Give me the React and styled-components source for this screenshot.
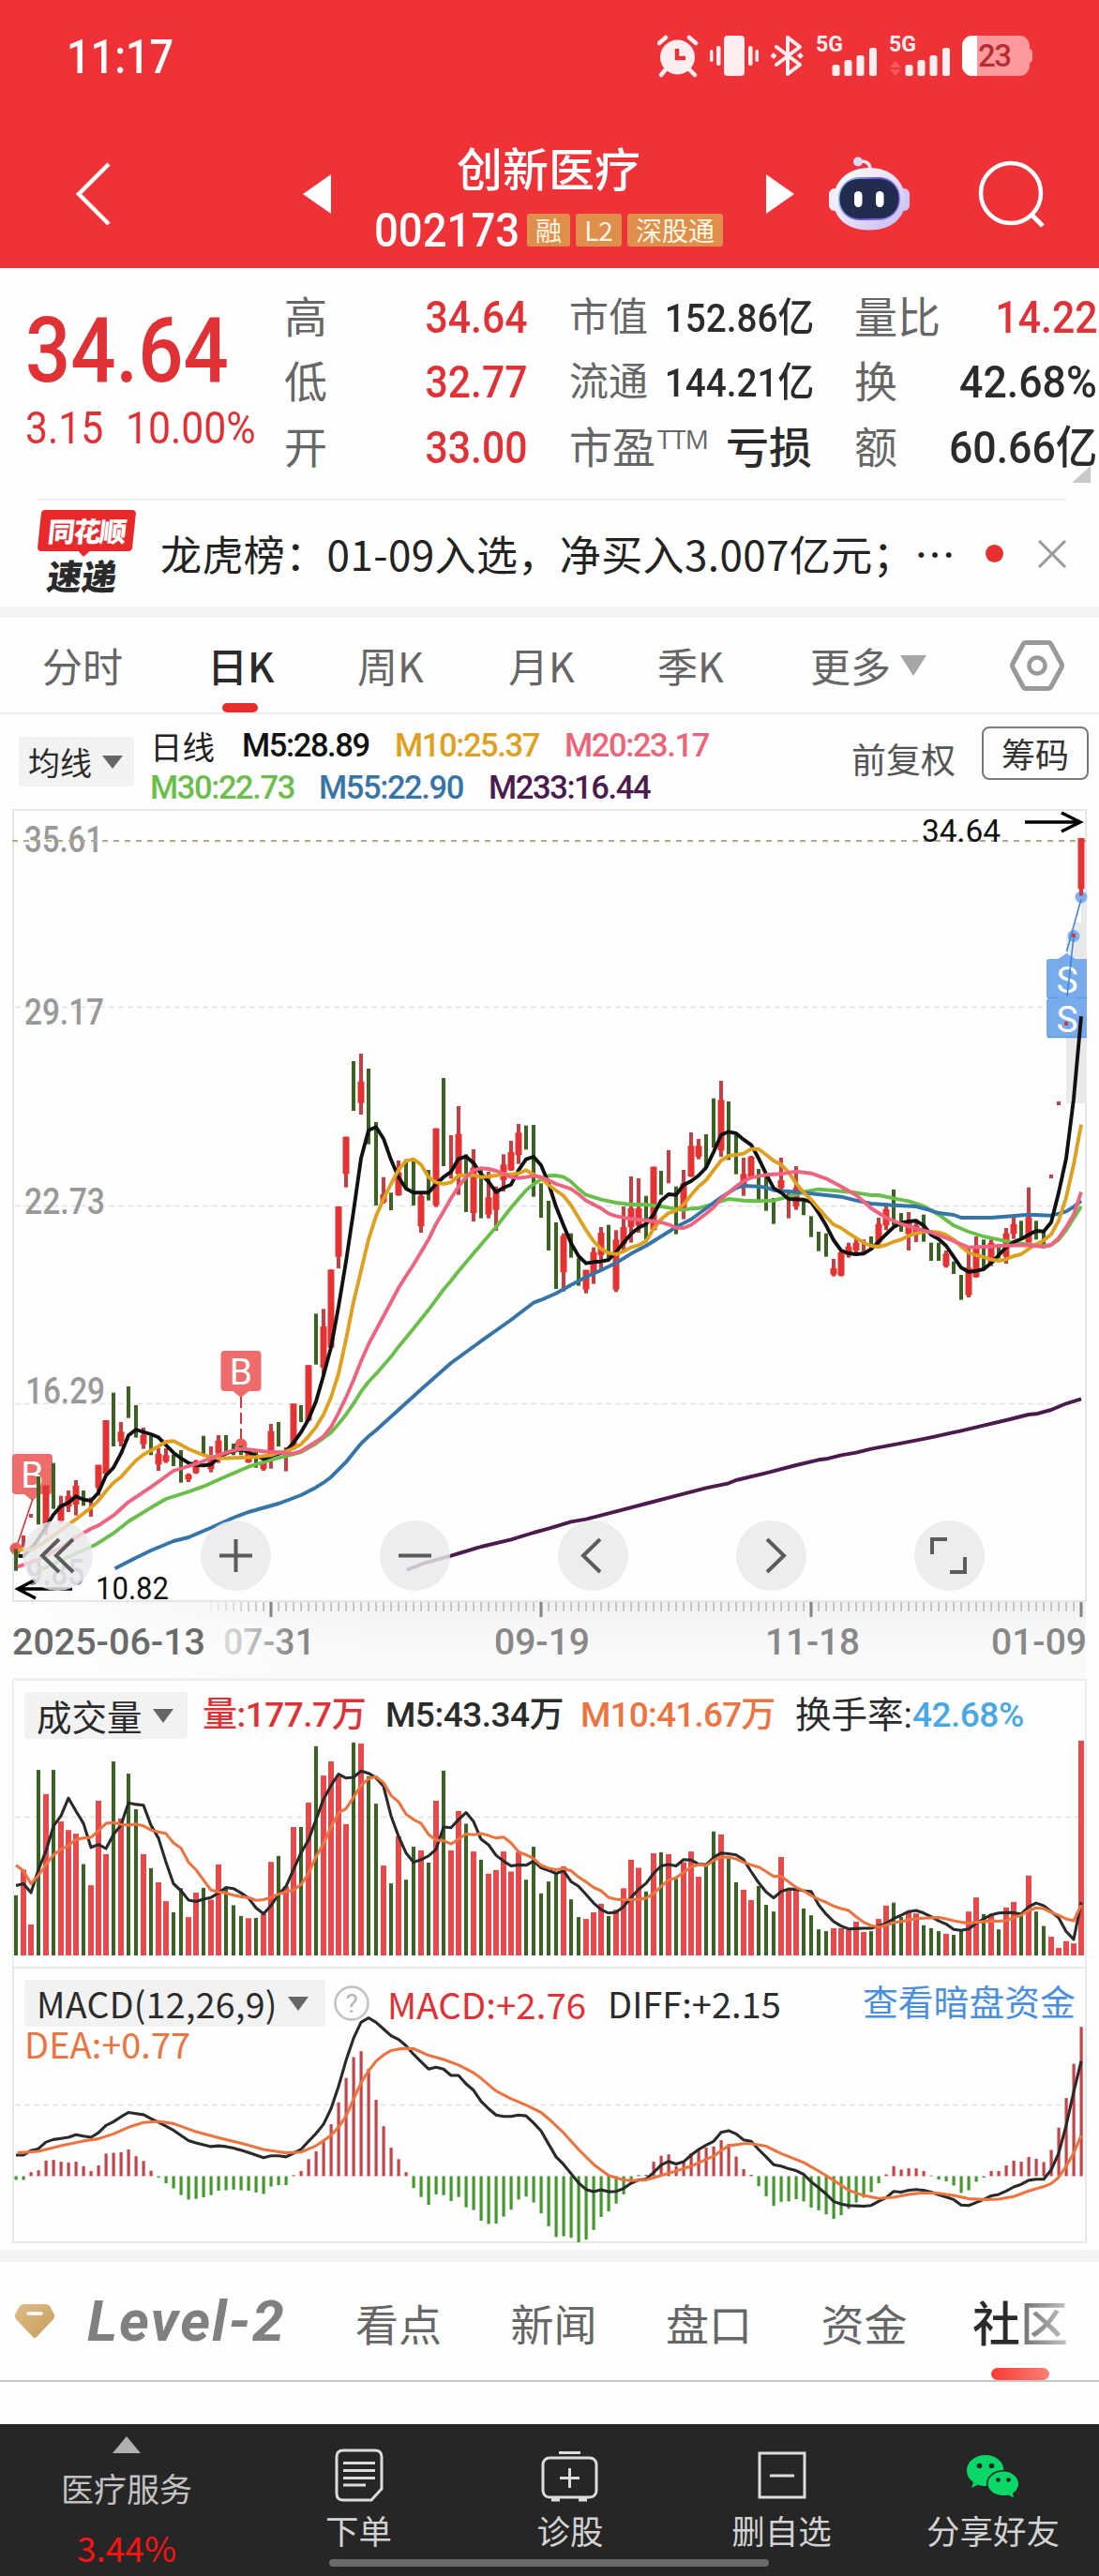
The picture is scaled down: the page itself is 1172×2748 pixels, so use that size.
import React from 'react';
import styled, { createGlobalStyle } from 'styled-components';

const GlobalStyle = createGlobalStyle`
  body {
    margin: 0;
    background: #fefefe;
    font-family: Roboto, "Noto Sans CJK SC", sans-serif;
  }
  * {
    box-sizing: border-box;
  }
  svg {
    display: block;
    flex: none;
  }
`;

const RED = '#e03236';
const DARK = '#2b2b2b';

const Page = styled.div`
  width: 1172px;
  height: 2748px;
  overflow: hidden;
  display: flex;
  flex-direction: column;
`;

/* ---------- top ---------- */

const Header = styled.header`
  height: 286px;
  background: #ef3138;
  color: #fff;
`;

const StatusBar = styled.div`
  height: 119px;
  padding: 0 71px 0 71px;
  display: flex;
  align-items: center;
  justify-content: space-between;
`;

const Clock = styled.div`
  margin-top: 2px;
  font-size: 50px;
  font-weight: 500;
  transform: scaleX(0.9);
  transform-origin: left;
`;

const NavBar = styled.div`
  height: 167px;
  padding: 8px 0 0 80px;
  display: flex;
  align-items: center;
`;

const TitleBlock = styled.div`
  width: 464px;
  padding-top: 8px;
  display: flex;
  flex-direction: column;
  align-items: center;
  gap: 20px;
`;

const Title = styled.div`
  font-size: 49px;
  line-height: 50px;
  font-weight: 500;
`;

const CodeRow = styled.div`
  height: 36px;
  display: flex;
  align-items: center;
  gap: 6px;
`;

const Code = styled.span`
  width: 157px;
  font-size: 50px;
  font-weight: 500;
  transform: scaleX(0.91);
  transform-origin: left;
`;

const Tag = styled.span`
  height: 35px;
  padding: 0 9px;
  border-radius: 3px;
  background: #df8f4b;
  color: #fff6e4;
  font: 28px/34px "Noto Sans CJK SC", sans-serif;
`;

const Spacer = styled.div`
  flex: none;
  width: ${(p) => p.$w}px;
`;

/* ---------- quote ---------- */

const Quote = styled.section`
  height: 246px;
  display: flex;
`;

const PriceBlock = styled.div`
  flex: none;
  width: 303px;
  padding: 48px 0 0 27px;
  color: ${RED};
  white-space: nowrap;
`;

const Price = styled.div`
  font-size: 96px;
  line-height: 80px;
  font-weight: 500;
  transform: scaleX(0.885);
  transform-origin: left;
`;

const Change = styled.div`
  display: flex;
  margin-top: 19px;
  font-size: 48px;
  line-height: 48px;
  transform: scaleX(0.89);
  transform-origin: left;
  span:first-child {
    width: 127px;
  }
`;

const StatColumn = styled.div`
  width: 259px;
  margin-right: 45px;
  padding-top: 18px;
  flex: none;
`;

const Stat = styled.div`
  height: 69.5px;
  display: flex;
  align-items: center;
  justify-content: space-between;
  white-space: nowrap;
`;

const StatLabel = styled.span`
  color: #666;
  font-size: ${(p) => p.$size || 46}px;
  line-height: 60px;
  sup {
    font: 28px/20px "Open Sans", sans-serif;
    letter-spacing: -0.5px;
    margin-left: 2px;
    vertical-align: 15px;
  }
`;

const StatValue = styled.span`
  color: ${(p) => (p.$red ? RED : DARK)};
  font-size: ${(p) => p.$size || 48}px;
  line-height: 60px;
  font-weight: 500;
  transform: scaleX(${(p) => p.$sx || 0.89});
  transform-origin: right;
`;

const Fold = styled.div`
  position: absolute;
  left: 1143px;
  top: 497px;
  border-left: 20px solid transparent;
  border-bottom: 18px solid #c9c9c9;
`;

/* ---------- news ---------- */

const News = styled.section`
  height: 115px;
  margin: 0 35px 0 40px;
  border-top: 2px solid #eee;
  display: flex;
  align-items: center;
`;

const Logo = styled.div`
  width: 104px;
  margin-top: -2px;
  display: flex;
  flex-direction: column;
  align-items: center;
`;

const LogoTop = styled.div`
  position: relative;
  width: 101px;
  height: 44px;
  border-radius: 4px;
  background: #e8292c;
  transform: skewX(-6deg);
  color: #fff;
  font: 900 29px/42px "Noto Sans CJK SC", sans-serif;
  letter-spacing: -1.5px;
  text-align: center;
  &::after {
    content: '';
    position: absolute;
    left: 43px;
    top: 43px;
    border: 7px solid transparent;
    border-top-color: #e8292c;
    border-bottom: 0;
  }
`;

const LogoBottom = styled.div`
  margin: 3px 8px 0 0;
  color: #2a2a2a;
  font: 900 37px/44px "Noto Sans CJK SC", sans-serif;
  transform: skewX(-8deg);
`;

const NewsText = styled.div`
  width: 850px;
  margin: -2px 0 0 27px;
  color: #222;
  font: 44px/60px "Noto Sans CJK SC", sans-serif;
  letter-spacing: 0.4px;
  white-space: nowrap;
`;

const Dot = styled.i`
  width: 19px;
  height: 19px;
  margin-left: 30px;
  border-radius: 50%;
  background: #e62f2f;
`;

const Band = styled.div`
  height: ${(p) => p.$h}px;
  background: #f3f3f4;
`;

/* ---------- period tabs ---------- */

const Tabs = styled.nav`
  height: 103px;
  border-bottom: 2px solid #ececec;
  display: flex;
  align-items: center;
`;

const Tab = styled.div`
  position: relative;
  flex: none;
  width: ${(p) => p.$w}px;
  height: 100%;
  padding-left: ${(p) => p.$pad || 0}px;
  color: ${(p) => (p.$on ? DARK : '#666')};
  font: ${(p) => (p.$on ? 500 : 400)} 43px/99px "Noto Sans CJK SC", sans-serif;
  display: flex;
  align-items: center;
`;

const TabMark = styled.i`
  position: absolute;
  left: 16px;
  bottom: 0;
  width: 38px;
  height: 10px;
  border-radius: 5px;
  background: #e62e2e;
`;

const Caret = styled.i`
  flex: none;
  border: ${(p) => p.$s}px solid transparent;
  border-top: ${(p) => p.$h}px solid ${(p) => p.$c || '#666'};
  border-bottom: 0;
`;

/* ---------- moving averages ---------- */

const MaBar = styled.section`
  height: 101px;
  padding-left: 20px;
  display: flex;
`;

const Picker = styled.div`
  width: ${(p) => p.$w}px;
  height: ${(p) => p.$h}px;
  padding-left: ${(p) => p.$pad}px;
  margin-top: ${(p) => p.$mt || 0}px;
  flex: none;
  border-radius: 4px;
  background: #f2f2f2;
  color: #2b2b2b;
  display: flex;
  align-items: center;
  gap: 11px;
  font: ${(p) => p.$size}px/46px "Noto Sans CJK SC", sans-serif;
  letter-spacing: ${(p) => p.$ls || 0}px;
`;

const MaList = styled.div`
  width: 744px;
  padding: 11px 0 0 17px;
`;

const MaRow = styled.div`
  height: 44.5px;
  display: flex;
  gap: 29px;
  align-items: center;
  white-space: nowrap;
`;

const MaItem = styled.span`
  width: ${(p) => p.$w}px;
  color: ${(p) => p.$c};
  font-size: 34.5px;
  font-weight: ${(p) => p.$weight || 500};
  letter-spacing: ${(p) => p.$ls ?? -1.4}px;
`;

const Adjust = styled.div`
  width: 139px;
  color: #555;
  font: 37px/94px "Noto Sans CJK SC", sans-serif;
`;

const ChipButton = styled.div`
  width: 114px;
  height: 57px;
  margin-top: 13px;
  border: 2px solid #7a7a7a;
  border-radius: 8px;
  color: #333;
  text-align: center;
  font: 36px/52px "Noto Sans CJK SC", sans-serif;
`;

/* ---------- charts ---------- */

const ChartBox = styled.section`
  position: relative;
  height: ${(p) => p.$h}px;
`;

const Controls = styled.div`
  position: absolute;
  left: 24px;
  top: 759px;
  display: flex;
  gap: 115.3px;
`;

const RoundButton = styled.div`
  width: 75px;
  height: 75px;
  border-radius: 50%;
  background: rgba(233, 233, 235, 0.82);
`;

const PanelHead = styled.div`
  position: absolute;
  left: 26px;
  top: ${(p) => p.$top}px;
  width: 1130px;
  display: flex;
  align-items: center;
`;

const Figure = styled.span`
  width: ${(p) => p.$w}px;
  margin-left: ${(p) => p.$ml || 0}px;
  color: ${(p) => p.$c};
  font: ${(p) => p.$weight || 500} ${(p) => p.$size || 37}px/46px ${(p) => (p.$cjk ? '' : 'Roboto, ')}"Noto Sans CJK SC", sans-serif;
  letter-spacing: ${(p) => p.$ls || 0}px;
  white-space: nowrap;
`;

const Dea = styled(Figure)`
  position: absolute;
  left: 26px;
  top: 62px;
  line-height: 40px;
`;

/* ---------- bottom ---------- */

const InfoTabs = styled.nav`
  height: 128px;
  padding-left: 14px;
  border-bottom: 2px solid #c6c6c6;
  display: flex;
  align-items: center;
`;

const LevelTwo = styled.div`
  width: 319px;
  padding-left: 33px;
  color: #808080;
  font: italic 700 61px/70px Roboto, sans-serif;
  letter-spacing: 2px;
`;

const InfoTab = styled.div`
  width: 165.5px;
  margin-top: 1px;
  color: #666;
  font: 46px/70px "Noto Sans CJK SC", sans-serif;
`;

const CommunityTab = styled.div`
  position: relative;
  width: 102px;
  height: 126px;
  margin-left: -4px;
  font: 500 51px/126px "Noto Sans CJK SC", sans-serif;
  color: transparent;
  background: linear-gradient(90deg, #2b2b2b 48%, #777 55%, #c4c4c4);
  background-clip: text;
  white-space: nowrap;
`;

const InfoMark = styled.i`
  align-self: flex-end;
  width: 62px;
  height: 13px;
  margin-left: -82px;
  border-radius: 7px;
  background: linear-gradient(90deg, #fb3b33, #f98077);
`;

const Blank = styled.div`
  flex: 1;
`;

const BottomBar = styled.footer`
  position: relative;
  height: 162px;
  background: #262626;
  display: flex;
`;

const BottomItem = styled.div`
  width: ${(p) => p.$w}px;
  padding-top: 23px;
  display: flex;
  flex-direction: column;
  align-items: center;
  gap: 7px;
  color: #d2d2d2;
  font: 35.5px/46px "Noto Sans CJK SC", sans-serif;
`;

const Sector = styled.div`
  width: 270px;
  padding-top: 13px;
  display: flex;
  flex-direction: column;
  align-items: center;
  color: #c2c2c2;
  font: 35px/46px "Noto Sans CJK SC", sans-serif;
`;

const SectorArrow = styled.i`
  border: 15.5px solid transparent;
  border-bottom: 18px solid #b0b0b0;
  border-top: 0;
  margin-bottom: 14px;
`;

const SectorChange = styled.div`
  margin-top: 17px;
  color: #fa1310;
  font: 37px/46px "Noto Sans CJK SC", sans-serif;
`;

const HomeBar = styled.i`
  position: absolute;
  left: 351px;
  top: 144px;
  width: 469px;
  height: 8px;
  border-radius: 4px;
  background: #6a6a6a;
`;

/* ---------- data ---------- */

// [rising, high, low, bodyTop, bodyBottom], in thirds of a pixel below y = 860
const candles = [
  [0, 2380, 2450], [1, 2337, 2375], [1, 2268, 2280], [0, 2148, 2302], [1, 2177, 2335, 2177, 2310], [0, 2105, 2252],
  [1, 2210, 2297, 2240, 2290], [1, 2193, 2262, 2210, 2245], [1, 2160, 2273, 2177, 2238], [0, 2193, 2242],
  [1, 2215, 2277], [1, 2111, 2210, 2111, 2185], [1, 1968, 2140, 1968, 2140], [0, 1880, 2052],
  [1, 1974, 2052, 2005, 2037], [0, 1860, 1961], [0, 1920, 2024], [1, 1992, 2060, 2015, 2045], [0, 2018, 2080],
  [1, 2058, 2130, 2075, 2110], [1, 2058, 2105, 2080, 2100], [0, 2078, 2115], [0, 2064, 2168],
  [1, 2138, 2166, 2142, 2158], [1, 2095, 2140, 2100, 2137], [0, 2018, 2080], [1, 2052, 2135, 2100, 2125],
  [1, 2016, 2105, 2033, 2075], [0, 2016, 2080], [0, 2043, 2080], [0, 2050, 2080], [1, 2065, 2105, 2070, 2103],
  [0, 2070, 2120], [1, 2080, 2130, 2100, 2125], [1, 1980, 2123, 2003, 2080], [0, 1974, 2052], [1, 2055, 2132],
  [1, 1915, 2062, 1915, 2050], [0, 1920, 1974], [1, 1792, 1970, 1792, 1970], [0, 1627, 1790],
  [1, 1612, 1825, 1668, 1800], [1, 1486, 1736, 1486, 1736], [1, 1284, 1482, 1284, 1445], [1, 1061, 1223, 1061, 1180],
  [0, 819, 978], [1, 795, 990, 884, 953], [0, 843, 1085], [0, 1014, 1281], [1, 1190, 1275, 1245, 1270],
  [0, 1240, 1296], [1, 1137, 1250, 1175, 1248], [0, 1133, 1230], [0, 1140, 1281], [1, 1240, 1368, 1250, 1348],
  [0, 1167, 1265], [1, 1034, 1286, 1034, 1280], [0, 873, 1155], [1, 1056, 1195], [1, 963, 1247, 1052, 1180],
  [0, 1117, 1302], [1, 1101, 1332, 1160, 1305], [0, 1160, 1322], [1, 1173, 1322, 1255, 1310],
  [1, 1220, 1362, 1235, 1295], [1, 1117, 1236, 1150, 1200], [1, 1074, 1170, 1110, 1168], [1, 1020, 1148, 1048, 1120],
  [0, 1025, 1102], [0, 1023, 1253], [0, 1210, 1320], [0, 1266, 1425], [0, 1335, 1548], [1, 1370, 1556, 1378, 1495],
  [0, 1370, 1448], [0, 1450, 1538], [1, 1487, 1562, 1487, 1550], [1, 1415, 1532, 1430, 1500],
  [1, 1350, 1490, 1368, 1440], [0, 1343, 1450], [1, 1360, 1558, 1390, 1550], [1, 1284, 1430, 1350, 1405],
  [1, 1188, 1400, 1290, 1350], [1, 1194, 1368, 1290, 1345], [0, 1250, 1390], [1, 1157, 1360, 1157, 1360],
  [0, 1170, 1247], [1, 1104, 1210], [0, 1220, 1373], [1, 1167, 1325, 1210, 1295], [1, 1047, 1190, 1090, 1188],
  [1, 1068, 1133, 1090, 1125], [0, 1053, 1160], [0, 938, 1096], [1, 882, 1125, 943, 1105], [0, 948, 1135],
  [0, 1055, 1181], [1, 1128, 1250, 1180, 1215], [1, 1122, 1195, 1125, 1190], [0, 1164, 1263], [0, 1180, 1298],
  [0, 1257, 1340], [1, 1128, 1240, 1200, 1225], [1, 1240, 1322], [1, 1155, 1295, 1225, 1285], [0, 1265, 1312],
  [0, 1315, 1382], [0, 1365, 1427], [0, 1370, 1445], [1, 1452, 1508, 1482, 1502], [1, 1430, 1508, 1430, 1505],
  [1, 1400, 1448, 1412, 1440], [1, 1383, 1435, 1400, 1425], [1, 1390, 1435], [0, 1380, 1425],
  [1, 1320, 1415, 1340, 1400], [1, 1273, 1360, 1293, 1345], [0, 1230, 1345], [0, 1305, 1365],
  [1, 1302, 1425, 1335, 1372], [1, 1325, 1398, 1345, 1375], [0, 1310, 1397], [0, 1400, 1458], [0, 1400, 1458],
  [1, 1425, 1480, 1435, 1475], [0, 1460, 1500], [0, 1503, 1583], [1, 1410, 1575, 1480, 1568],
  [1, 1380, 1512, 1410, 1510], [0, 1390, 1485], [1, 1390, 1475, 1400, 1465], [0, 1405, 1450],
  [1, 1353, 1467, 1370, 1445], [1, 1315, 1388, 1340, 1372], [0, 1330, 1385], [1, 1223, 1400, 1318, 1400],
  [0, 1330, 1390], [0, 1365, 1418], [1, 1182, 1194], [1, 948, 960], [1, 693, 705], [1, 410, 423],
  [1, 105, 290, 105, 268],
];

// flat [bar index, y, bar index, y, ...] lists in the same unit as the candles
const ma5 = [0.3, 2402, 1, 2403, 2.5, 2365, 4, 2310, 5, 2270, 6, 2243, 7, 2232, 8, 2212, 9, 2222, 10, 2226, 11, 2200, 12, 2145, 13, 2120, 14, 2075, 15, 2017, 16, 1998, 17, 2006, 18, 2013, 19, 2023, 20, 2048, 21, 2072, 22, 2090, 23, 2105, 24, 2112, 25, 2113, 26, 2110, 27, 2088, 28, 2074, 29, 2067, 30, 2062, 31, 2070, 32, 2082, 33, 2092, 34, 2083, 35, 2076, 36, 2067, 37, 2040, 38, 2007, 39, 1965, 40, 1908, 41, 1825, 42, 1735, 43, 1605, 44, 1460, 45, 1300, 46, 1130, 47, 1040, 48, 1030, 49, 1067, 50, 1135, 51, 1190, 52, 1227, 53, 1240, 55, 1240, 56, 1212, 57, 1190, 58, 1173, 59, 1132, 60, 1124, 61, 1145, 62, 1180, 63, 1205, 64, 1238, 65, 1224, 66, 1214, 67, 1168, 68, 1133, 69, 1125, 70, 1152, 71, 1210, 72, 1285, 73, 1345, 74, 1402, 75, 1443, 76, 1466, 77, 1462, 78, 1460, 79, 1455, 80, 1430, 81, 1400, 82, 1372, 83, 1352, 84, 1340, 85, 1310, 86, 1265, 87, 1245, 88, 1247, 89, 1215, 90, 1203, 91, 1185, 92, 1160, 93, 1110, 94, 1055, 95, 1045, 96, 1050, 97, 1070, 98, 1087, 99, 1130, 100, 1180, 101, 1225, 102, 1240, 103, 1260, 105, 1262, 106, 1270, 107, 1305, 108, 1345, 109, 1392, 110, 1425, 111, 1434, 112, 1437, 113, 1435, 114, 1420, 115, 1397, 116, 1373, 117, 1350, 118, 1337, 119, 1332, 120, 1330, 121, 1345, 122, 1375, 123, 1388, 124, 1410, 125, 1445, 126, 1480, 127, 1493, 128, 1490, 129, 1485, 130, 1465, 131, 1440, 132, 1415, 133, 1398, 134, 1388, 135, 1375, 136, 1362, 137, 1364, 138, 1335, 139, 1240, 140, 1130, 141, 940, 142, 676];
const ma10 = [0.3, 2383, 2.2, 2382, 4, 2355, 6, 2320, 8, 2285, 10, 2248, 11, 2225, 12, 2195, 13, 2168, 14, 2150, 15, 2123, 16, 2097, 17, 2078, 18, 2065, 19, 2052, 20, 2037, 21, 2035, 22, 2047, 23, 2060, 24, 2070, 25, 2080, 27, 2090, 30, 2088, 32, 2086, 34, 2080, 35, 2072, 36, 2068, 37, 2058, 38, 2045, 39, 2020, 40, 1990, 41, 1950, 42, 1895, 43, 1820, 44, 1710, 45, 1590, 46, 1490, 47, 1390, 48, 1315, 49, 1260, 50, 1212, 51, 1168, 52, 1138, 53, 1133, 54, 1150, 55, 1190, 56, 1207, 57, 1212, 58, 1207, 59, 1185, 60, 1184, 61, 1184, 62, 1190, 63, 1188, 64, 1185, 65, 1180, 66, 1182, 67, 1178, 68, 1168, 69, 1182, 70, 1193, 71, 1215, 72, 1233, 73, 1250, 74, 1280, 75, 1320, 76, 1360, 77, 1395, 78, 1420, 79, 1433, 80, 1437, 81, 1428, 82, 1415, 83, 1408, 84, 1395, 85, 1355, 86, 1325, 87, 1305, 88, 1297, 89, 1278, 90, 1248, 91, 1220, 92, 1200, 93, 1168, 94, 1137, 95, 1122, 96, 1119, 97, 1115, 98, 1100, 99, 1100, 100, 1118, 101, 1138, 102, 1150, 103, 1175, 104, 1210, 105, 1240, 106, 1262, 107, 1290, 108, 1318, 109, 1342, 110, 1353, 111, 1370, 112, 1385, 113, 1400, 114, 1410, 115, 1413, 116, 1407, 117, 1397, 118, 1390, 119, 1378, 120, 1370, 121, 1365, 122, 1365, 123, 1367, 124, 1375, 125, 1390, 126, 1412, 127, 1432, 128, 1440, 129, 1446, 130, 1454, 131, 1458, 132, 1453, 133, 1443, 134, 1437, 135, 1420, 136, 1405, 137, 1393, 138, 1373, 139, 1330, 140, 1255, 141, 1150, 142, 1022];
const ma20 = [0.2, 2437, 3, 2415, 6, 2375, 8, 2343, 10, 2315, 11, 2305, 13, 2273, 15, 2230, 18, 2182, 21, 2130, 24, 2108, 27, 2080, 28.5, 2068, 30, 2060, 31, 2062, 33, 2068, 35, 2071, 37, 2075, 38, 2067, 39, 2052, 40, 2037, 41, 2020, 42, 1990, 43, 1945, 44, 1895, 45, 1840, 46, 1780, 47, 1725, 48, 1680, 49, 1635, 51, 1545, 52, 1507, 53, 1470, 54, 1430, 55, 1390, 56, 1340, 57, 1300, 58, 1258, 59, 1220, 60, 1190, 61, 1168, 62, 1162, 63, 1164, 64, 1170, 65, 1180, 66, 1190, 67, 1193, 68, 1190, 69, 1186, 70, 1190, 71, 1200, 72, 1212, 73, 1220, 74, 1228, 75, 1245, 76, 1265, 78, 1290, 79, 1307, 80, 1315, 82, 1324, 84, 1328, 86, 1335, 87, 1342, 88, 1352, 89, 1353, 90, 1343, 91, 1325, 92, 1307, 93, 1287, 94, 1260, 95, 1240, 96, 1220, 97, 1203, 98, 1192, 99, 1187, 100, 1183, 102, 1180, 104, 1172, 106, 1178, 108, 1195, 110, 1220, 112, 1248, 113, 1268, 114, 1290, 116, 1320, 118, 1340, 120, 1355, 122, 1367, 124, 1385, 126, 1405, 127, 1415, 129, 1413, 132, 1409, 135, 1408, 137, 1413, 138, 1407, 139, 1385, 140, 1350, 141, 1310, 142, 1238];
const ma30 = [3, 2450, 7, 2405, 10.5, 2368, 13, 2330, 15, 2292, 18, 2248, 20, 2220, 23, 2197, 25, 2180, 28, 2148, 31, 2117, 34, 2095, 38, 2070, 40, 2043, 42, 2008, 43, 1980, 44, 1950, 45, 1915, 46, 1877, 47, 1845, 48, 1820, 50, 1765, 51, 1733, 53, 1675, 55, 1615, 57, 1550, 58, 1522, 58.7, 1500, 61, 1434, 64, 1350, 66, 1288, 68, 1232, 69, 1213, 70, 1197, 71, 1186, 72, 1185, 73, 1190, 74, 1205, 75, 1228, 76, 1247, 78, 1262, 80, 1272, 82, 1278, 84, 1278, 86, 1284, 88, 1292, 89, 1295, 90, 1291, 91, 1290, 93, 1275, 95, 1260, 97, 1265, 99, 1267, 101, 1265, 103, 1253, 105, 1237, 107, 1229, 109, 1233, 112, 1240, 114, 1248, 115, 1248, 117, 1258, 119, 1267, 121, 1283, 123, 1310, 125, 1345, 127, 1365, 129, 1380, 131, 1390, 133, 1400, 135, 1406, 137, 1410, 138, 1407, 139, 1390, 140, 1360, 141, 1322, 142, 1283];
const ma55 = [13.2, 2443, 16, 2408, 18, 2385, 21, 2355, 23, 2343, 26, 2312, 29, 2280, 31, 2262, 35, 2235, 38, 2208, 40, 2183, 41, 2168, 42, 2150, 44, 2102, 45, 2072, 46, 2043, 47, 2020, 48, 2000, 51, 1935, 54, 1870, 58, 1785, 62, 1715, 66, 1647, 68, 1610, 69, 1592, 70, 1583, 72, 1562, 74, 1535, 76, 1510, 78, 1488, 80, 1465, 82, 1435, 84, 1410, 86, 1380, 88, 1350, 90, 1325, 92, 1290, 94, 1255, 96, 1225, 97, 1218, 99, 1220, 100, 1223, 101, 1232, 103, 1236, 106, 1243, 108, 1248, 110, 1253, 112, 1265, 114, 1275, 117, 1280, 120, 1284, 122, 1297, 123, 1305, 125, 1311, 126, 1320, 130, 1320, 132, 1316, 135, 1310, 138, 1313, 139, 1307, 140, 1300, 141, 1285, 142, 1266];
const ma233 = [52.1, 2447, 54.5, 2425, 58, 2402, 62, 2373, 66, 2350, 69, 2328, 71, 2315, 74, 2293, 76, 2285, 80, 2260, 84, 2235, 88, 2210, 92, 2185, 95, 2170, 96, 2160, 100, 2137, 104, 2112, 107, 2095, 108, 2092, 110, 2080, 112, 2072, 114, 2060, 118, 2042, 122, 2023, 126, 2002, 129, 1985, 132, 1968, 135, 1950, 136, 1948, 138, 1935, 140, 1915, 142, 1900];

// lower panels: one value per bar, 2.529 units to a pixel below y = 1780
const volumes = [614, 545, 693, 276, 341, 276, 415, 438, 448, 530, 587, 359, 503, 253, 407, 286, 382, 503, 541, 579, 630, 660, 595, 673, 607, 594, 626, 531, 593, 641, 670, 676, 675, 665, 524, 508, 590, 430, 430, 364, 212, 291, 253, 292, 422, 202, 205, 293, 367, 534, 582, 455, 572, 483, 493, 526, 359, 278, 493, 387, 421, 496, 518, 556, 546, 496, 550, 498, 572, 483, 609, 577, 553, 536, 625, 673, 678, 660, 637, 670, 653, 595, 518, 540, 604, 501, 498, 503, 570, 525, 496, 564, 535, 442, 450, 515, 579, 599, 627, 589, 640, 658, 511, 600, 600, 650, 668, 706, 711, 703, 703, 708, 685, 713, 711, 678, 642, 634, 673, 658, 663, 695, 703, 711, 718, 721, 710, 658, 620, 665, 668, 706, 647, 632, 670, 561, 658, 697, 726, 756, 738, 744, 197];
const volMa5 = [588, 583, 607, 545, 495, 428, 400, 352, 387, 420, 485, 477, 488, 450, 425, 365, 369, 371, 425, 460, 525, 583, 602, 627, 631, 625, 620, 608, 593, 596, 608, 622, 648, 664, 642, 612, 590, 545, 500, 465, 410, 355, 318, 287, 298, 296, 279, 285, 297, 320, 400, 455, 500, 525, 518, 508, 490, 430, 432, 410, 391, 415, 463, 478, 506, 522, 535, 532, 533, 522, 540, 547, 555, 548, 577, 590, 612, 635, 653, 662, 660, 645, 620, 598, 582, 555, 535, 531, 535, 518, 519, 530, 532, 512, 500, 502, 505, 518, 550, 580, 605, 621, 604, 597, 598, 602, 604, 640, 665, 685, 697, 705, 704, 703, 703, 697, 690, 677, 668, 658, 655, 662, 672, 683, 692, 706, 709, 705, 690, 678, 667, 662, 661, 661, 665, 645, 635, 642, 658, 675, 712, 733, 633];
const volMa10 = [533, 548, 583, 560, 532, 505, 490, 480, 463, 460, 458, 440, 420, 418, 423, 425, 422, 427, 438, 443, 448, 473, 487, 525, 545, 573, 600, 605, 608, 614, 618, 620, 628, 626, 620, 611, 605, 600, 585, 555, 510, 475, 430, 392, 380, 350, 318, 300, 294, 310, 345, 362, 395, 410, 420, 450, 465, 467, 476, 462, 449, 451, 448, 453, 460, 457, 473, 497, 505, 515, 533, 541, 545, 542, 548, 565, 578, 593, 602, 620, 625, 626, 626, 625, 622, 610, 590, 573, 567, 552, 538, 531, 534, 520, 511, 511, 516, 525, 532, 538, 550, 563, 563, 578, 593, 602, 615, 625, 633, 643, 650, 655, 672, 687, 696, 700, 695, 688, 685, 680, 677, 676, 675, 674, 678, 683, 687, 689, 687, 685, 683, 684, 682, 675, 668, 655, 648, 650, 660, 668, 678, 683, 640];
const macd = [1382, 1382, 1361, 1356, 1330, 1328, 1333, 1335, 1333, 1345, 1358, 1343, 1311, 1309, 1307, 1300, 1318, 1331, 1357, 1376, 1391, 1405, 1423, 1435, 1433, 1429, 1423, 1411, 1410, 1408, 1410, 1411, 1416, 1420, 1400, 1396, 1396, 1369, 1358, 1326, 1305, 1278, 1232, 1173, 1107, 1051, 1035, 1082, 1166, 1237, 1295, 1326, 1361, 1404, 1428, 1449, 1421, 1423, 1439, 1428, 1456, 1463, 1492, 1501, 1500, 1481, 1462, 1435, 1427, 1443, 1472, 1507, 1536, 1534, 1538, 1550, 1543, 1517, 1482, 1467, 1446, 1421, 1390, 1369, 1368, 1333, 1317, 1313, 1345, 1330, 1310, 1300, 1295, 1292, 1275, 1285, 1319, 1353, 1368, 1399, 1426, 1452, 1441, 1440, 1434, 1440, 1457, 1464, 1475, 1487, 1477, 1460, 1443, 1430, 1415, 1391, 1367, 1345, 1354, 1351, 1351, 1358, 1370, 1381, 1386, 1397, 1417, 1410, 1387, 1376, 1358, 1358, 1343, 1330, 1333, 1320, 1325, 1334, 1301, 1241, 1161, 1069, 969];
const diff = [1315, 1315, 1303, 1298, 1280, 1273, 1270, 1267, 1260, 1264, 1267, 1255, 1235, 1225, 1212, 1200, 1203, 1206, 1217, 1226, 1237, 1248, 1262, 1276, 1282, 1287, 1292, 1290, 1292, 1296, 1302, 1308, 1315, 1322, 1317, 1317, 1320, 1310, 1300, 1278, 1257, 1232, 1190, 1130, 1060, 1000, 957, 945, 957, 975, 993, 1003, 1020, 1043, 1063, 1083, 1078, 1083, 1100, 1100, 1123, 1140, 1170, 1190, 1207, 1211, 1211, 1207, 1209, 1228, 1250, 1285, 1320, 1340, 1365, 1390, 1408, 1414, 1409, 1414, 1413, 1405, 1391, 1382, 1380, 1362, 1342, 1332, 1339, 1333, 1315, 1300, 1288, 1278, 1254, 1249, 1258, 1274, 1278, 1300, 1320, 1341, 1345, 1352, 1357, 1367, 1387, 1403, 1420, 1440, 1447, 1451, 1452, 1453, 1451, 1440, 1430, 1413, 1415, 1410, 1408, 1410, 1415, 1422, 1428, 1435, 1450, 1451, 1443, 1435, 1425, 1421, 1412, 1401, 1394, 1383, 1380, 1380, 1355, 1310, 1235, 1145, 1062];
const dea = [0.2, 1309, 3, 1305, 6, 1290, 9, 1277, 11, 1271, 13, 1258, 15, 1240, 17, 1227, 19, 1224, 21, 1230, 24, 1252, 27, 1268, 30, 1283, 33, 1300, 36, 1309, 38, 1307, 40, 1290, 42, 1262, 43, 1240, 44, 1210, 45, 1165, 46, 1120, 47, 1088, 48, 1062, 49, 1045, 50, 1033, 51, 1029, 52, 1027, 53, 1028, 55, 1046, 57, 1057, 59, 1072, 61, 1093, 62, 1108, 64, 1142, 66, 1163, 68, 1180, 70, 1200, 71, 1217, 73, 1255, 75, 1300, 77, 1340, 79, 1370, 81, 1382, 82, 1384, 84, 1382, 86, 1370, 88, 1358, 90, 1345, 92, 1327, 93, 1318, 94, 1303, 95, 1290, 97, 1284, 98, 1284, 100, 1291, 102, 1311, 105, 1335, 107, 1358, 109, 1383, 111, 1410, 113, 1424, 115, 1432, 117, 1429, 119, 1421, 121, 1417, 123, 1418, 125, 1424, 127, 1433, 129, 1435, 131, 1434, 133, 1427, 135, 1412, 137, 1400, 138, 1392, 139, 1375, 140, 1345, 141, 1310, 142, 1262];

const barX = (i) => 17 + 8 * i;
const priceY = (v) => 860 + v / 3;
const panelY = (v) => 1780 + v / 2.529;

const pairPoints = (list, toY) => {
  const out = [];
  for (let i = 0; i < list.length; i += 2) {
    out.push(`${barX(list[i]).toFixed(1)},${toY(list[i + 1]).toFixed(1)}`);
  }
  return out.join(' ');
};

const seriesPoints = (list) => list.map((v, i) => `${barX(i)},${panelY(v).toFixed(1)}`).join(' ');

const Line = ({ points, color, width = 3.9 }) => (
  <polyline points={points} fill="none" stroke={color} strokeWidth={width} strokeLinejoin="round" />
);

const Label = ({ x, y, w, size = 38, color = '#999', weight = 500, children }) => (
  <text x={x} y={y} fill={color} fontSize={size} fontWeight={weight} textLength={w} lengthAdjust="spacingAndGlyphs">
    {children}
  </text>
);

const averages = [
  [ma233, '#4b1a4f'],
  [ma30, '#6abf4b'],
  [ma55, '#3575a8'],
  [ma5, '#111'],
  [ma10, '#e0a01f'],
  [ma20, '#ee6480'],
];

const BuyFlag = ({ x, y }) => (
  <g>
    <path d={`M${x + 4} ${y}h35a4 4 0 0 1 4 4v35a4 4 0 0 1-4 4h-9l-8.500 7l-8.500-7h-9a4 4 0 0 1-4-4v-35a4 4 0 0 1 4-4z`} fill="#ee6c6c" />
    <text x={x + 21.5} y={y + 36} fill="#fff" fontSize="39" textAnchor="middle">B</text>
  </g>
);

const SellFlag = ({ y }) => (
  <g>
    <path d={`M1119 ${y}h9l9.500-6l9.500 6h12v42h-40a3 3 0 0 1-3-3v-36a3 3 0 0 1 3-3z`} fill="#78abec" />
    <path d={`M1117 ${y + 41.5}H1159`} stroke="#5c98e4" strokeWidth="1.500" />
    <text x="1138" y={y + 36} fill="#fff" fontSize="39" textAnchor="middle">S</text>
  </g>
);

const PriceChart = () => (
  <svg width="1172" height="926" viewBox="0 864 1172 926">
    <defs>
      <linearGradient id="axis" x1="0" y1="0" x2="0" y2="1">
        <stop offset="0" stopColor="#f2f1f4" />
        <stop offset="0.6" stopColor="#f9f9fa" />
        <stop offset="1" stopColor="#fafafb" />
      </linearGradient>
      <linearGradient id="axisFade" x1="0" y1="0" x2="1" y2="0">
        <stop offset="0" stopColor="#fcfcfc" stopOpacity="0.75" />
        <stop offset="0.4" stopColor="#fcfcfc" stopOpacity="0.5" />
        <stop offset="1" stopColor="#fcfcfc" stopOpacity="0" />
      </linearGradient>
      <linearGradient id="axisLeft" x1="0" y1="0" x2="1" y2="0">
        <stop offset="0" stopColor="#fefefe" />
        <stop offset="1" stopColor="#fefefe" stopOpacity="0" />
      </linearGradient>
    </defs>
    <rect x="14" y="1710" width="1144" height="80" fill="url(#axis)" />
    <rect x="14" y="1710" width="400" height="80" fill="url(#axisLeft)" />
    <g stroke="#e2e2e2" strokeWidth="1.300" strokeDasharray="6 4">
      <path d="M16 1075.500H1157M16 1287.500H1157M16 1498.500H1157" />
    </g>
    <path d="M14 1710V865H1158V1709H14" fill="none" stroke="#e6e6e8" strokeWidth="2" />
    <Label x="26" y="910" w="84">35.61</Label>
    <Label x="26" y="1094" w="85">29.17</Label>
    <Label x="26" y="1296" w="86">22.73</Label>
    <Label x="27" y="1498" w="85">16.29</Label>
    <Label x="28" y="1692" w="62" color="#8b8b8b">9.85</Label>
    <path d="M13 898H1158" stroke="#b3a88c" strokeWidth="1.800" strokeDasharray="6 6" />

    <path d="M1153 960H1159V1178H1137V1000H1145V985H1153z" fill="#e9e9e9" />
    <SellFlag y={1024} />
    <SellFlag y={1066} />
    <circle cx="1153" cy="958" r="6.500" fill="#7db2ee" />
    <circle cx="1145" cy="999.500" r="6.500" fill="#7db2ee" />
    <path d="M1153 960L1137.500 1016M1145 1000L1138 1064" stroke="#3f83dd" strokeWidth="1.600" fill="none" />

    <BuyFlag x={13} y={1552} />
    <BuyFlag x={235.500} y={1442} />
    <path d="M35 1600L17 1653" stroke="#d8353a" strokeWidth="1.600" />
    <path d="M257 1491V1540" stroke="#d8353a" strokeWidth="2" strokeDasharray="12 5" />
    <circle cx="17" cy="1653" r="6.500" fill="#ee5c5c" />
    <circle cx="257" cy="1542" r="6.500" fill="#ee5c5c" />

    {candles.map(([up, high, low, top, bottom], i) => (
      <g key={i}>
        <rect x={barX(i) - 2} y={priceY(high)} width="4" height={(low - high) / 3} fill={up ? '#cf3c3f' : '#38641f'} />
        {top !== undefined && (
          <rect x={barX(i) - 3.5} y={priceY(top)} width="7" height={(bottom - top) / 3} fill="#e53232" />
        )}
      </g>
    ))}
    {averages.map(([list, color]) => (
      <Line key={color} points={pairPoints(list, priceY)} color={color} />
    ))}

    <Label x="983" y="898.500" w="84" size={33} color="#111" weight={400}>34.64</Label>
    <path d="M1093 878H1152M1132 868L1152 878L1132 888" fill="none" stroke="#000" strokeWidth="3.400" />
    <Label x="102" y="1707" w="78" size={34} color="#111" weight={400}>10.82</Label>
    <path d="M77 1696H19M38 1686L19 1696L38 1706" fill="none" stroke="#000" strokeWidth="3.400" />

    {candles.map((_, i) => {
      if (i < 26) return null;
      const major = i === 34 || i === 70 || i === 106 || i === 142;
      return (
        <rect
          key={i}
          x={barX(i) - (major ? 1.5 : 0.5)}
          y="1710"
          width={major ? 3 : 1.2}
          height={major ? 16 : 10}
          fill={major ? '#838383' : '#a5a5a5'}
          opacity={Math.min(1, (i - 24) / 9)}
        />
      );
    })}
    <Label x="13" y="1766" w="206" color="#6a6a6a">2025-06-13</Label>
    <Label x="238" y="1766" w="98" color="#888">07-31</Label>
    <Label x="527" y="1766" w="102" color="#888">09-19</Label>
    <Label x="816" y="1766" w="101" color="#888">11-18</Label>
    <Label x="1057" y="1766" w="102" color="#888">01-09</Label>
    <rect x="236" y="1734" width="76" height="36" fill="url(#axisFade)" />
  </svg>
);

const VolumeChart = () => (
  <svg width="1172" height="309" viewBox="0 1790 1172 309">
    <rect x="14" y="1790" width="1144" height="3" fill="#f8f8f9" />
    <path d="M14 2099V1793H1158V2099" fill="none" stroke="#ececee" strokeWidth="2" />
    <path d="M16 1939.500H1157" stroke="#e2e2e2" strokeWidth="1.300" strokeDasharray="6 4" />
    {volumes.map((v, i) => {
      const up = candles[i][0];
      const w = up ? 6 : 4;
      return (
        <rect key={i} x={barX(i) - w / 2} y={panelY(v)} width={w} height={2087 - panelY(v)} fill={up ? '#e64a4c' : '#38641f'} />
      );
    })}
    <Line points={seriesPoints(volMa5)} color="#2a2a2a" width={3.1} />
    <Line points={seriesPoints(volMa10)} color="#ec7440" width={3.1} />
  </svg>
);

const MacdChart = () => (
  <svg width="1172" height="302" viewBox="0 2099 1172 302">
    <path d="M14 2393V2100H1158V2393z" fill="none" stroke="#e8e8ea" strokeWidth="2" />
    <path d="M16 2246.500H1157" stroke="#e2e2e2" strokeWidth="1.300" strokeDasharray="6 4" />
    {macd.map((v, i) => (
      <rect
        key={i}
        x={barX(i) - 1.5}
        y={Math.min(2322.5, panelY(v))}
        width="3.200"
        height={Math.abs(panelY(v) - 2322.5)}
        fill={v < 1372 ? '#c94246' : '#409a2c'}
      />
    ))}
    <Line points={seriesPoints(diff)} color="#2a2a2a" width={3.1} />
    <Line points={pairPoints(dea, panelY)} color="#ec7440" width={3.1} />
  </svg>
);

/* ---------- icons ---------- */

const StatusIcons = () => (
  <svg width="400" height="66" viewBox="701 27 400 66" fill="#ffeeef">
    <circle cx="722.500" cy="61" r="18.500" />
    <path d="M703 46l7-6M742 46l-7-6M710 74l-5 6M735 74l6 6" stroke="#ffeeef" strokeWidth="4.500" strokeLinecap="round" />
    <path d="M722 52v10h9" stroke="#e2333b" strokeWidth="4.500" fill="none" />
    <rect x="772" y="38" width="22" height="43" rx="4" />
    <rect x="764" y="49" width="4.500" height="21" rx="2" />
    <rect x="757" y="53" width="3.500" height="13" rx="1.700" />
    <rect x="798" y="49" width="4.500" height="21" rx="2" />
    <rect x="805.500" y="53" width="3.500" height="13" rx="1.700" />
    <path d="M828 50l25 19-13 10V40l13 10-25 19" fill="none" stroke="#ffeeef" strokeWidth="4" strokeLinejoin="round" strokeLinecap="round" />
    <path d="M825 56l3.500 3.500-3.500 3.500-3.500-3.500zM853.500 56l3.500 3.500-3.500 3.500-3.500-3.500z" />
    <g fontSize="23" fontWeight="700">
      <text x="870" y="55" textLength="29">5G</text>
      <text x="948" y="55" textLength="29">5G</text>
    </g>
    {[887.5, 965.5].map((x) => (
      <g key={x}>
        <rect x={x} y="69" width="8" height="12" rx="2.500" />
        <rect x={x + 13} y="64" width="8" height="17" rx="2.500" />
        <rect x={x + 26} y="59" width="8" height="22" rx="2.500" />
        <rect x={x + 39.5} y="51" width="8" height="30" rx="2.500" />
      </g>
    ))}
    <path d="M949 72l6-7 6 7zM949 74h12l-6 7z" fill="#f4595e" />
    <rect x="1026" y="38" width="72" height="43" rx="11" fill="#fb999c" />
    <path d="M1097 52a4 4 0 0 1 4 4v7a4 4 0 0 1-4 4z" fill="#fb999c" />
    <path d="M1042 38h-5a11 11 0 0 0-11 11v21a11 11 0 0 0 11 11h5z" fill="#fff" />
    <text x="1043" y="71" fontSize="33" fontWeight="500" fill="#b92b32" textLength="36">23</text>
  </svg>
);

const Robot = () => (
  <svg width="86" height="80" viewBox="0 0 86 80">
    <defs>
      <linearGradient id="shell" x1="0" y1="0" x2="1" y2="1">
        <stop offset="0" stopColor="#fff" />
        <stop offset="0.5" stopColor="#e6e0f7" />
        <stop offset="1" stopColor="#c3b9f2" />
      </linearGradient>
      <linearGradient id="rim" x1="0" y1="0" x2="1" y2="0.300">
        <stop offset="0" stopColor="#8fd3ef" />
        <stop offset="0.600" stopColor="#6a4be0" />
        <stop offset="1" stopColor="#8c7cf0" />
      </linearGradient>
    </defs>
    <path d="M32 5q12-1 12 9" fill="none" stroke="#e8e2f6" strokeWidth="3.500" />
    <circle cx="31" cy="5.500" r="5" fill="#dcd8f5" />
    <rect x="0" y="34" width="12" height="24" rx="6" fill="#f1eefb" />
    <rect x="74" y="34" width="12" height="24" rx="6" fill="#cfc7f4" />
    <path d="M43 12C67 12 80 27 81.500 45C82 66 66 78.500 43 78.500C20 78.500 4 66 4.500 45C6 27 19 12 43 12z" fill="url(#shell)" />
    <rect x="10" y="22" width="66" height="46" rx="22" fill="url(#rim)" />
    <rect x="11.500" y="24" width="63" height="42" rx="20" fill="#212c4f" />
    <rect x="27" y="37" width="8.500" height="17" rx="4.200" fill="#fff" />
    <rect x="50" y="37" width="8.500" height="17" rx="4.200" fill="#fff" />
  </svg>
);

const controlIcons = [
  'M39 20L21 37.500L39 55M54 20L36 37.500L54 55',
  'M20 37.500H55M37.500 20V55',
  'M20 37.500H55',
  'M45 20L27 37.500L45 55',
  'M33 20L51 37.500L33 55',
  'M19 36V20H35M54 39V55H38',
];

const App = () => (
  <Page>
    <GlobalStyle />
    <Header>
      <StatusBar>
        <Clock>11:17</Clock>
        <StatusIcons />
      </StatusBar>
      <NavBar>
        <svg width="38" height="68" viewBox="0 0 38 68">
          <path d="M36 2L4 34L36 66" fill="none" stroke="#fff" strokeWidth="4.500" />
        </svg>
        <Spacer $w={205} />
        <svg width="30" height="42" viewBox="0 0 30 42">
          <path d="M30 0V42L0 21z" fill="#fff" />
        </svg>
        <TitleBlock>
          <Title>创新医疗</Title>
          <CodeRow>
            <Code>002173</Code>
            <Tag>融</Tag>
            <Tag>L2</Tag>
            <Tag>深股通</Tag>
          </CodeRow>
        </TitleBlock>
        <svg width="30" height="42" viewBox="0 0 30 42">
          <path d="M0 0V42L30 21z" fill="#fff" />
        </svg>
        <Spacer $w={37} />
        <Robot />
        <Spacer $w={73} />
        <svg width="75" height="72" viewBox="0 0 75 72">
          <circle cx="35" cy="35" r="32" fill="none" stroke="#fff" strokeWidth="4.500" />
          <path d="M57 58L69 70" stroke="#fff" strokeWidth="5" />
        </svg>
      </NavBar>
    </Header>

    <Quote>
      <PriceBlock>
        <Price>34.64</Price>
        <Change>
          <span>3.15</span>
          <span>10.00%</span>
        </Change>
      </PriceBlock>
      <StatColumn>
        <Stat><StatLabel>高</StatLabel><StatValue $red>34.64</StatValue></Stat>
        <Stat><StatLabel>低</StatLabel><StatValue $red>32.77</StatValue></Stat>
        <Stat><StatLabel>开</StatLabel><StatValue $red>33.00</StatValue></Stat>
      </StatColumn>
      <StatColumn>
        <Stat><StatLabel $size={42}>市值</StatLabel><StatValue $size={43} $sx={0.9}>152.86亿</StatValue></Stat>
        <Stat><StatLabel $size={42}>流通</StatLabel><StatValue $size={43} $sx={0.9}>144.21亿</StatValue></Stat>
        <Stat><StatLabel>市盈<sup>TTM</sup></StatLabel><StatValue $size={46} $sx={1}>亏损</StatValue></Stat>
      </StatColumn>
      <StatColumn>
        <Stat><StatLabel>量比</StatLabel><StatValue $red>14.22</StatValue></Stat>
        <Stat><StatLabel>换</StatLabel><StatValue $sx={0.93}>42.68%</StatValue></Stat>
        <Stat><StatLabel>额</StatLabel><StatValue $sx={0.93}>60.66亿</StatValue></Stat>
      </StatColumn>
      <Fold />
    </Quote>

    <News>
      <Logo>
        <LogoTop>同花顺</LogoTop>
        <LogoBottom>速递</LogoBottom>
      </Logo>
      <NewsText>龙虎榜：01-09入选，净买入3.007亿元；…</NewsText>
      <Dot />
      <Spacer $w={37} />
      <svg width="30" height="30" viewBox="0 0 30 30">
        <path d="M1 1L29 29M29 1L1 29" stroke="#999" strokeWidth="3" />
      </svg>
    </News>
    <Band $h={12} />

    <Tabs>
      <Tab $w={221} $pad={45}>分时</Tab>
      <Tab $w={160} $on>日K<TabMark /></Tab>
      <Tab $w={161}>周K</Tab>
      <Tab $w={159}>月K</Tab>
      <Tab $w={163}>季K</Tab>
      <Tab $w={213}>更多<Spacer $w={10} /><Caret $s={14} $h={22} $c="#a6a6a6" /></Tab>
      <svg width="58" height="54" viewBox="0 0 58 54">
        <path d="M17 2.500H41Q43 2.500 44 4.500L55 25Q56 27 55 29L44 49.500Q43 51.500 41 51.500H17Q15 51.500 14 49.500L3 29Q2 27 3 25L14 4.500Q15 2.500 17 2.500z" fill="none" stroke="#999" strokeWidth="5" />
        <circle cx="29" cy="27" r="8.500" fill="none" stroke="#999" strokeWidth="4.500" />
      </svg>
    </Tabs>

    <MaBar>
      <Picker $w={123} $h={53} $pad={10} $mt={24} $size={34}>均线<Caret $s={11} $h={14} /></Picker>
      <MaList>
        <MaRow>
          <MaItem $w={69} $c="#222" $ls={0} $weight={400}>日线</MaItem>
          <MaItem $w={134} $c="#111">M5:28.89</MaItem>
          <MaItem $w={152} $c="#dfa020">M10:25.37</MaItem>
          <MaItem $w={152} $c="#ec6479">M20:23.17</MaItem>
        </MaRow>
        <MaRow>
          <MaItem $w={151} $c="#6abf4b">M30:22.73</MaItem>
          <MaItem $w={152} $c="#3575a8">M55:22.90</MaItem>
          <MaItem $w={170} $c="#4b1a4f">M233:16.44</MaItem>
        </MaRow>
      </MaList>
      <Spacer $w={21} />
      <Adjust>前复权</Adjust>
      <ChipButton>筹码</ChipButton>
    </MaBar>

    <ChartBox $h={926}>
      <PriceChart />
      <Controls>
        {controlIcons.map((d) => (
          <RoundButton key={d}>
            <svg width="75" height="75" viewBox="0 0 75 75">
              <path d={d} fill="none" stroke="#5c5c5e" strokeWidth="4" />
            </svg>
          </RoundButton>
        ))}
      </Controls>
    </ChartBox>

    <ChartBox $h={309}>
      <VolumeChart />
      <PanelHead $top={16}>
        <Picker $w={174} $h={50} $pad={13} $size={37.500}>成交量<Caret $s={11} $h={15} /></Picker>
        <Figure $ml={16} $w={195} $c={RED} $ls={-0.5}>量:177.7万</Figure>
        <Figure $w={208} $c={DARK} $ls={-0.5}>M5:43.34万</Figure>
        <Figure $w={229} $c="#ec7440" $ls={-0.8}>M10:41.67万</Figure>
        <Figure $w={125} $c={DARK} $weight={400} $size={38.500}>换手率:</Figure>
        <Figure $c="#48a8e6" $ls={-0.5}>42.68%</Figure>
      </PanelHead>
    </ChartBox>

    <ChartBox $h={302}>
      <MacdChart />
      <PanelHead $top={14}>
        <Picker $w={321} $h={50} $pad={13} $size={37.500} $ls={0.3}>MACD(12,26,9)<Caret $s={11} $h={15} /></Picker>
        <Spacer $w={9} />
        <svg width="38" height="38" viewBox="0 0 38 38">
          <circle cx="19" cy="19" r="17.500" fill="none" stroke="#c2c2c2" strokeWidth="2.500" />
          <text x="19" y="29" fontSize="28" fill="#b5b5b5" textAnchor="middle">?</text>
        </svg>
        <Figure $cjk $weight={400} $ml={19} $w={235} $c={RED} $size={38.500}>MACD:+2.76</Figure>
        <Figure $cjk $weight={400} $w={272} $c={DARK} $size={38}>DIFF:+2.15</Figure>
        <Figure $c="#4a8fdf" $weight={400} $size={37.800}>查看暗盘资金</Figure>
      </PanelHead>
      <Dea $cjk $weight={400} $c="#ec7440" $size={38}>DEA:+0.77</Dea>
    </ChartBox>
    <Band $h={13} />

    <InfoTabs>
      <svg width="46" height="40" viewBox="0 0 46 40">
        <defs>
          <linearGradient id="gem" x1="0" y1="0" x2="1" y2="1">
            <stop offset="0" stopColor="#dfbd87" />
            <stop offset="1" stopColor="#c79c5b" />
          </linearGradient>
        </defs>
        <path d="M12 2H34Q37 2 39 4L44 13Q45 15 43 18L25 37Q23 39 21 37L3 18Q1 15 2 13L7 4Q9 2 12 2z" fill="url(#gem)" />
        <path d="M16 12H30" stroke="#fff" strokeWidth="3.500" strokeLinecap="round" />
      </svg>
      <LevelTwo>Level-2</LevelTwo>
      <InfoTab>看点</InfoTab>
      <InfoTab>新闻</InfoTab>
      <InfoTab>盘口</InfoTab>
      <InfoTab>资金</InfoTab>
      <CommunityTab>社区</CommunityTab>
      <InfoMark />
    </InfoTabs>
    <Blank />

    <BottomBar>
      <Sector>
        <SectorArrow />
        医疗服务
        <SectorChange>3.44%</SectorChange>
      </Sector>
      <BottomItem $w={225}>
        <svg width="52" height="60" viewBox="0 0 52 60" fill="none" stroke="#dcdcdc" strokeWidth="3">
          <path d="M9 5H43Q50 5 50 12V46L39 58H9Q2 58 2 51V12Q2 5 9 5zM9 18.500H43M9 26.500H43M9 34.500H43M9 42H33" />
        </svg>
        下单
      </BottomItem>
      <BottomItem $w={226}>
        <svg width="62" height="60" viewBox="0 0 62 60" fill="none" stroke="#dcdcdc" strokeWidth="3">
          <rect x="2" y="13" width="57" height="42" rx="7" />
          <path d="M19 7.500H42M30.500 24V45M20 34.500H41" />
          <path d="M11 57.500H20M40 57.500H49" strokeWidth="4" />
        </svg>
        诊股
      </BottomItem>
      <BottomItem $w={225}>
        <svg width="52" height="60" viewBox="0 0 52 60" fill="none" stroke="#dcdcdc" strokeWidth="3">
          <path d="M2 8H50V55H2zM13 32H39" />
        </svg>
        删自选
      </BottomItem>
      <BottomItem $w={226}>
        <svg width="56" height="60" viewBox="0 0 56 60">
          <path d="M20 10C31 10 39 17 39.500 26C29 26 21 32 21 41L21 43C17 43 14 42.500 12 41.500L5 45L7 39C3 36 0 32 0 26.500C0 17 9 10 20 10z" fill="#09d868" />
          <path d="M39 27.500C48 27.500 55 33.500 55 40.500C55 45 52.500 48.500 49 50.500L50 55.500L44.500 52.500C42.500 53 41 53 39 53C30 53 22.500 47.500 22.500 40.500C22.500 33.500 30 27.500 39 27.500z" fill="#09d868" />
          <g fill="#262626">
            <circle cx="13.500" cy="21.500" r="2.800" />
            <circle cx="26.500" cy="21.500" r="2.800" />
            <circle cx="33.500" cy="36.500" r="2.300" />
            <circle cx="44.500" cy="36.500" r="2.300" />
          </g>
        </svg>
        分享好友
      </BottomItem>
      <HomeBar />
    </BottomBar>
  </Page>
);

export default App;
